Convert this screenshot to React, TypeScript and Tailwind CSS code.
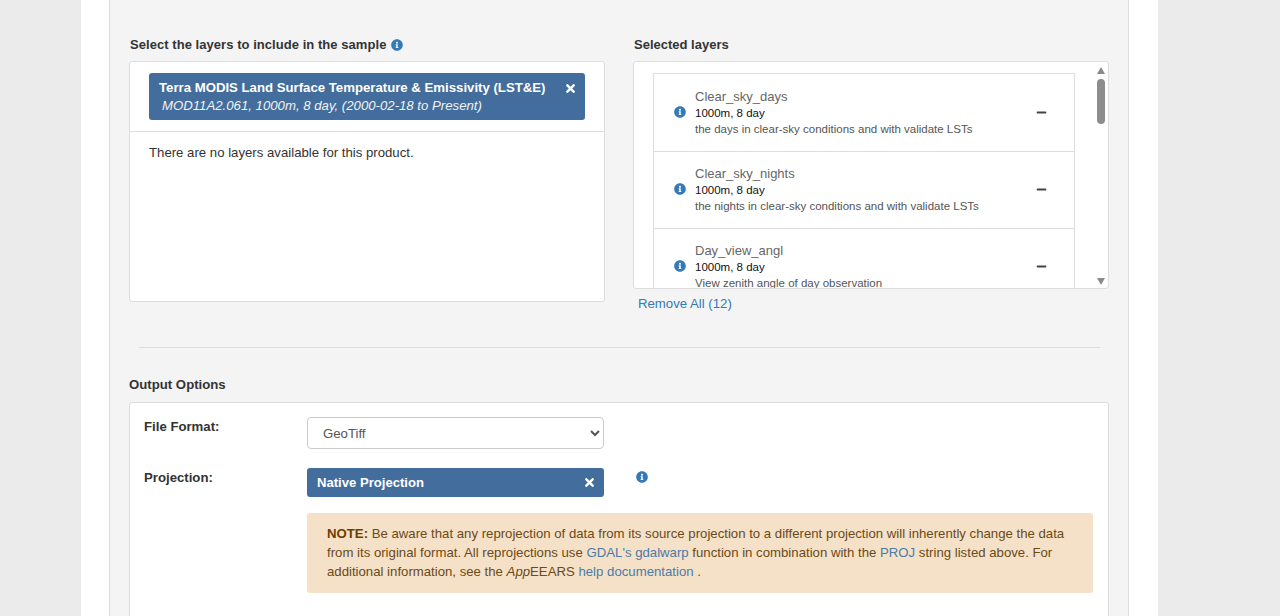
import { FaInfoCircle, FaMinus, FaTimes } from 'react-icons/fa'

const layers = [
  { name: 'Clear_sky_days', desc: 'the days in clear-sky conditions and with validate LSTs' },
  { name: 'Clear_sky_nights', desc: 'the nights in clear-sky conditions and with validate LSTs' },
  { name: 'Day_view_angl', desc: 'View zenith angle of day observation' },
]

const LayerRow = ({ name, desc }: { name: string; desc: string }) => (
  <div className="flex items-center h-[77px] shrink-0 border-b border-[#ddd] pb-[2px] pl-[20px] pr-[27px]">
    <FaInfoCircle className="text-[#337ab7] w-[12px] h-[12px] mr-[9px] shrink-0" />
    <div className="flex-1 min-w-0">
      <div className="text-[13px] leading-[16px] text-[#666] pt-[1px]">{name}</div>
      <div className="text-[11.5px] leading-[16px] text-[#111]">1000m, 8 day</div>
      <div className="text-[11.5px] leading-[16px] text-[#555]">{desc}</div>
    </div>
    <FaMinus className="text-[#444] w-[11px] h-[11px] shrink-0" />
  </div>
)

export default function App() {
  return (
    <div className="h-[616px] overflow-hidden bg-[#ebebeb] font-['Liberation_Sans',Arial,sans-serif] text-[#333]">
      <div className="ml-[81px] w-[1077px] h-full bg-white pl-[28px]">
        <div className="w-[1020px] h-full bg-[#f4f4f4] border-x border-[#ddd] pt-[37px] pl-[19px]">
          {/* layer pickers */}
          <div className="flex gap-[28px]">
            <div className="w-[476px]">
              <div className="flex items-center h-[16px] pl-[1px] text-[13px] font-bold text-[#333] tracking-[0.05px]">
                Select the layers to include in the sample
                <FaInfoCircle className="text-[#337ab7] w-[12px] h-[12px] ml-[5px]" />
              </div>
              <div className="mt-[8px] h-[241px] bg-white border border-[#ddd] rounded-[3px]">
                <div className="h-[70px] border-b border-[#ddd] pl-[19px] pr-[19px] pt-[11px]">
                  <div className="h-[47px] bg-[#426d9c] rounded-[3px] pl-[10px] pr-[8px] pt-[6px] text-white">
                    <div className="flex items-center justify-between h-[18px] text-[13.2px] font-bold">
                      Terra MODIS Land Surface Temperature &amp; Emissivity (LST&amp;E)
                      <FaTimes className="w-[13px] h-[13px]" />
                    </div>
                    <div className="h-[18px] pl-[3px] text-[13.2px] leading-[18px] italic text-[#f2f2f2]">
                      MOD11A2.061, 1000m, 8 day, (2000-02-18 to Present)
                    </div>
                  </div>
                </div>
                <div className="pl-[19px] pt-[13px] text-[13.2px] leading-[16px] text-[#333]">
                  There are no layers available for this product.
                </div>
              </div>
            </div>

            <div className="w-[476px]">
              <div className="flex items-center h-[16px] pl-[1px] text-[13px] font-bold text-[#333]">Selected layers</div>
              <div className="relative mt-[8px] h-[228px] bg-white border border-[#ddd] rounded-[3px] pl-[19px] pt-[11px] overflow-hidden">
                <div className="w-[422px] h-[216px] border-x border-t border-[#ddd] pt-[1px] overflow-hidden flex flex-col">
                  {layers.map((l) => (
                    <LayerRow key={l.name} name={l.name} desc={l.desc} />
                  ))}
                </div>
                {/* scrollbar */}
                <div className="absolute right-[3px] top-[5px] bottom-[3px] w-[9px] flex flex-col items-center justify-between">
                  <div className="w-0 h-0 border-x-[4.5px] border-x-transparent border-b-[7px] border-b-[#8a8a8a]" />
                  <div className="absolute top-[12px] w-[8px] h-[45px] rounded-full bg-[#8d8d8d]" />
                  <div className="w-0 h-0 border-x-[4.5px] border-x-transparent border-t-[7px] border-t-[#8a8a8a]" />
                </div>
              </div>
              <a className="block mt-[7px] pl-[5px] text-[13.2px] leading-[16px] text-[#337ab7]">Remove All (12)</a>
            </div>
          </div>

          <hr className="mt-[35px] ml-[10px] w-[961px] border-[#ddd]" />

          {/* output options */}
          <div className="mt-[29px] h-[16px] flex items-center text-[13.2px] font-bold text-[#333]">Output Options</div>
          <div className="mt-[9px] w-[980px] h-[300px] bg-white border border-[#ddd] rounded-[3px] pl-[14px] pr-[15px] pt-[14px]">
            <div className="flex">
              <div className="w-[163px] pt-[1px] text-[13.2px] leading-[18px] font-bold text-[#333]">File Format:</div>
              <select className="w-[297px] h-[32px] bg-white border border-[#ccc] rounded-[4px] pl-[11px] text-[13.2px] text-[#555]">
                <option>GeoTiff</option>
              </select>
            </div>
            <div className="flex mt-[19px]">
              <div className="w-[163px] pt-[1px] text-[13.2px] leading-[18px] font-bold text-[#333]">Projection:</div>
              <div className="w-[297px] h-[29px] bg-[#426d9c] rounded-[3px] pl-[10px] pr-[8px] flex items-center justify-between text-[13.1px] font-bold text-white">
                Native Projection
                <FaTimes className="w-[13px] h-[13px]" />
              </div>
              <FaInfoCircle className="text-[#337ab7] w-[12px] h-[12px] ml-[32px] mt-[3px]" />
            </div>
            <div className="ml-[163px] mt-[16px] h-[80px] bg-[#f5e1c8] rounded-[3px] px-[20px] pt-[11px] text-[13.2px] leading-[19px] text-[#6b4a16]">
              <strong className="text-[#6a3f00]">NOTE:</strong> Be aware that any reprojection of data from its source projection to a different projection will inherently change the data from its original format. All reprojections use <a className="text-[#4a7ba8]">GDAL's gdalwarp</a> function in combination with the <a className="text-[#4a7ba8]">PROJ</a> string listed above. For additional information, see the <em>App</em>EEARS <a className="text-[#4a7ba8]">help documentation</a> .
            </div>
          </div>
        </div>
      </div>
    </div>
  )
}
